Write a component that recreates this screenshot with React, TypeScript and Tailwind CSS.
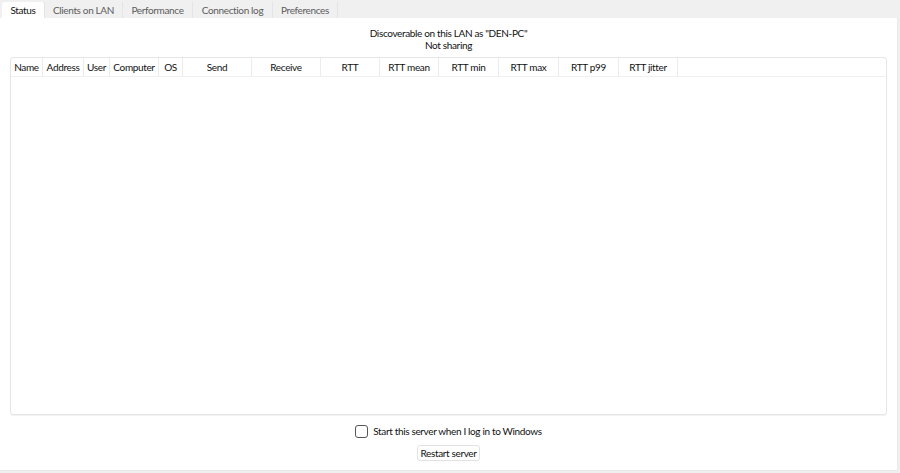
import React from 'react';

// tab label + fixed width, in px
const tabs: [string, number][] = [
  ['Status', 42],
  ['Clients on LAN', 78],
  ['Performance', 70],
  ['Connection log', 80],
  ['Preferences', 65],
];

// column label + fixed width, in px
const columns: [string, number][] = [
  ['Name', 32],
  ['Address', 41],
  ['User', 26],
  ['Computer', 49],
  ['OS', 24],
  ['Send', 69],
  ['Receive', 69],
  ['RTT', 59],
  ['RTT mean', 59],
  ['RTT min', 60],
  ['RTT max', 60],
  ['RTT p99', 60],
  ['RTT jitter', 59],
];

const App: React.FC = () => {
  return (
    <div
      className="w-[900px] h-[473px] bg-[#f0f0f0] flex flex-col text-[10px] tracking-[-0.35px] text-[#111]"
      style={{ fontFamily: 'Lato, "Open Sans", sans-serif' }}
    >
      {/* Tab strip */}
      <div className="flex h-[18px] items-end pl-[2px]">
        {tabs.map(([t, w], i) => (
          <div
            key={t}
            style={{ width: w }}
            className={
              i === 0
                ? 'h-[16px] flex items-center justify-center bg-white rounded-t-[3px] text-[#111]'
                : 'h-[16px] flex items-center justify-center border-l border-[#e4e4e4] text-[#5c5c5c]'
            }
          >
            {t}
          </div>
        ))}
        <div className="h-[16px] border-l border-[#e4e4e4]" />
      </div>

      {/* Status page */}
      <div className="flex-1 mr-[2px] mb-[2px] bg-white border-r border-b border-[#e8e8e8] flex flex-col px-[10px]">
        <div className="flex flex-col items-center pt-[9px] leading-[12px]">
          <span>Discoverable on this LAN as "DEN-PC"</span>
          <span>Not sharing</span>
        </div>

        <div className="mt-[6px] h-[358px] border border-[#e6e6e6] rounded-[3px] shadow-[0_1px_1px_rgba(0,0,0,0.06)] flex flex-col">
          <div className="flex h-[19px] border-b border-[#f0f0f0]">
            {columns.map(([label, w]) => (
              <div
                key={label}
                style={{ width: w }}
                className="flex items-center justify-center border-r border-[#ececec] whitespace-nowrap"
              >
                {label}
              </div>
            ))}
          </div>
          <div className="flex-1" />
        </div>

        <div className="flex flex-col items-center mt-[9px]">
          <label className="flex items-center gap-[5px] h-[14px]">
            <span className="w-[13px] h-[13px] border border-[#555] rounded-[3px] bg-white" />
            <span>Start this server when I log in to Windows</span>
          </label>
          <button className="mt-[7px] h-[16px] w-[63px] border border-[#e2e2e2] rounded-[3px] bg-white text-[10px] leading-none tracking-[-0.35px]">
            Restart server
          </button>
        </div>
      </div>
    </div>
  );
};

export default App;
